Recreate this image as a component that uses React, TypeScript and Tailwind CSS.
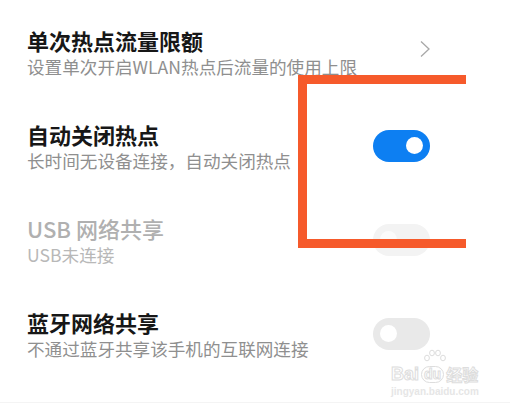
import { useState } from 'react';

type Row = {
  title: string;
  desc: string;
  kind: 'link' | 'toggle';
  on?: boolean;
  disabled?: boolean;
};

const rows: Row[] = [
  { title: '单次热点流量限额', desc: '设置单次开启WLAN热点后流量的使用上限', kind: 'link' },
  { title: '自动关闭热点', desc: '长时间无设备连接，自动关闭热点', kind: 'toggle', on: true },
  { title: 'USB 网络共享', desc: 'USB未连接', kind: 'toggle', disabled: true },
  { title: '蓝牙网络共享', desc: '不通过蓝牙共享该手机的互联网连接', kind: 'toggle' },
];

const Toggle = ({ on, disabled }: { on?: boolean; disabled?: boolean }) => {
  const track = on ? 'bg-[#0d7ff2] justify-end' : disabled ? 'bg-[#f3f3f3] justify-start' : 'bg-[#e9e9e9] justify-start';
  const knob = disabled ? 'bg-[#fbfbfb]' : 'bg-white';
  return (
    <div className={`w-[57px] h-[32px] rounded-full flex items-center px-[7px] -mt-[1px] ${track}`}>
      <div className={`w-[17px] h-[17px] rounded-full ${knob}`} />
    </div>
  );
};

const App = () => {
  const [items] = useState(rows);

  return (
    <div
      className="relative w-[510px] h-[404px] overflow-hidden bg-white pt-[5px]"
      style={{ fontFamily: '"Noto Sans CJK SC", "Noto Sans", sans-serif' }}
    >
      {items.map((row, i) => (
        <div key={i} className="h-[94px] flex items-center justify-between pl-[27px] pr-[80px]">
          <div className="flex flex-col">
            <span
              className={`text-[22px] leading-[28px] ${row.disabled ? 'font-medium text-[#b0b0b0]' : 'font-bold text-[#171717]'}`}
            >
              {row.title}
            </span>
            <span className={`mt-[1px] text-[17.6px] leading-[24px] ${row.disabled ? 'text-[#b8b8b8]' : 'text-[#8f8f8f]'}`}>
              {row.desc}
            </span>
          </div>
          {row.kind === 'link' ? (
            <svg width="12" height="18" viewBox="0 0 12 18" className="-mt-[7px] mr-[-1px]">
              <polyline points="2,1.5 10,9 2,16.5" fill="none" stroke="#a8a8a8" strokeWidth="1.3" />
            </svg>
          ) : (
            <Toggle on={row.on} disabled={row.disabled} />
          )}
        </div>
      ))}

      {/* annotation box */}
      <div className="absolute left-[298px] top-[75px] w-[168px] h-[173px] border-[#f65a2b] border-t-[9px] border-l-[9px] border-b-[9px]" />

      {/* watermark */}
      <div className="absolute left-[391px] top-[360px] flex flex-col items-start text-white">
        <div className="flex items-end">
          <span
            className="text-[18px] leading-[20px] font-bold [-webkit-text-stroke:1px_#dddddd]"
            style={{ fontFamily: '"Liberation Sans", sans-serif' }}
          >
            Bai
          </span>
          <span className="relative ml-[2px]">
            <svg width="26" height="14" viewBox="0 0 26 14" className="absolute left-[1px] -top-[11px]">
              <ellipse cx="5" cy="9" rx="2.4" ry="2.8" fill="white" stroke="#dddddd" />
              <ellipse cx="10" cy="4" rx="2.4" ry="2.8" fill="white" stroke="#dddddd" />
              <ellipse cx="16" cy="4" rx="2.4" ry="2.8" fill="white" stroke="#dddddd" />
              <ellipse cx="21" cy="9" rx="2.4" ry="2.8" fill="white" stroke="#dddddd" />
            </svg>
            <span
              className="relative inline-block rounded-[9px] border border-[#dddddd] bg-white px-[2px] text-[14px] leading-[15px] font-bold [-webkit-text-stroke:1px_#dddddd]"
              style={{ fontFamily: '"Liberation Sans", sans-serif' }}
            >
              du
            </span>
          </span>
          <span className="ml-[2px] text-[16px] leading-[20px] font-bold [-webkit-text-stroke:1px_#dddddd]">经验</span>
        </div>
        <span
          className="mt-[2px] text-[10px] leading-[12px] font-bold text-[#e6e6e6]"
          style={{ fontFamily: '"Liberation Sans", sans-serif' }}
        >
          jingyan.baidu.com
        </span>
      </div>

      <div className="absolute left-0 bottom-[1px] w-full h-px bg-[#f4f4f4]" />
    </div>
  );
};

export default App;
